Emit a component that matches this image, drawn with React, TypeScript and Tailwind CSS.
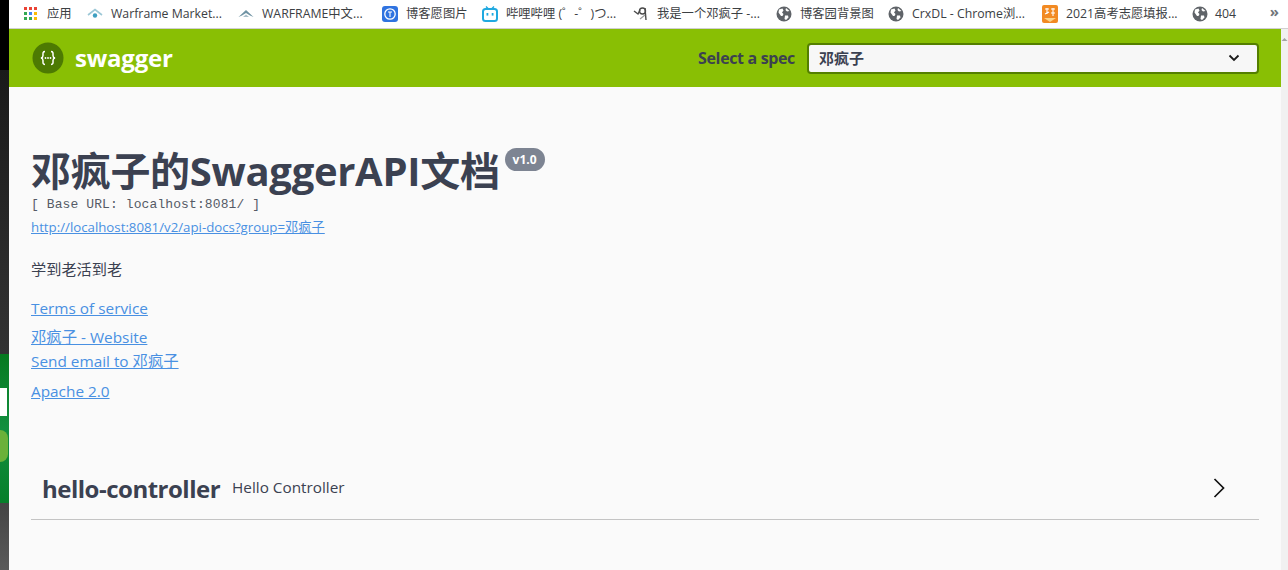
import React from "react";

const Globe = () => (
  <svg width="16" height="16" viewBox="0 0 16 16">
    <circle cx="8" cy="8" r="7.5" fill="#5f6368" />
    <path d="M3 3.500 6.500 2.500 7.500 4.500 6 6.500 7.500 8 6.500 10 5 10 2.500 6.500ZM9 9.500 12 9.500 12.500 11.500 10 14 8.500 13ZM10 2 13.500 5 11 5.500 9.500 4Z" fill="#fff" />
  </svg>
);

const AppsIcon = () => (
  <svg width="14" height="14" viewBox="0 0 14 14">
    <rect x="0" y="0" width="3" height="3" fill="#ea4335" />
    <rect x="5" y="0" width="3" height="3" fill="#ea4335" />
    <rect x="10" y="0" width="3" height="3" fill="#ea4335" />
    <rect x="0" y="5" width="3" height="3" fill="#34a853" />
    <rect x="5" y="5" width="3" height="3" fill="#4285f4" />
    <rect x="10" y="5" width="3" height="3" fill="#fbbc04" />
    <rect x="0" y="10" width="3" height="3" fill="#34a853" />
    <rect x="5" y="10" width="3" height="3" fill="#34a853" />
    <rect x="10" y="10" width="3" height="3" fill="#fbbc04" />
  </svg>
);

const MarketIcon = () => (
  <svg width="16" height="16" viewBox="0 0 16 16">
    <path d="M1 9 8 3.500 15 9" fill="none" stroke="#9cc7d6" strokeWidth="1.600" />
    <circle cx="8" cy="9.500" r="2.200" fill="#3f9fc0" />
  </svg>
);

const WarframeIcon = () => (
  <svg width="16" height="16" viewBox="0 0 16 16">
    <path d="M0.500 11 8 4 15.500 11 12 9.500 8 7 4 9.500Z" fill="#6f93a3" />
    <path d="M5 11 8 8.500 11 11Z" fill="#a9c0ca" />
  </svg>
);

const CnblogsIcon = () => (
  <svg width="16" height="16" viewBox="0 0 16 16">
    <rect width="16" height="16" rx="3" fill="#2f73e0" />
    <circle cx="8" cy="8" r="5.200" fill="none" stroke="#fff" strokeWidth="1.300" />
    <path d="M6 6H10M8 6V11" stroke="#fff" strokeWidth="1.100" />
  </svg>
);

const BiliIcon = () => (
  <svg width="16" height="16" viewBox="0 0 16 16">
    <path d="M4 0.500 6.500 3M12 0.500 9.500 3" stroke="#20a9e0" strokeWidth="1.400" />
    <rect x="1" y="3" width="14" height="12" rx="2.500" fill="none" stroke="#20a9e0" strokeWidth="2" />
    <rect x="4.500" y="7" width="1.800" height="2.600" fill="#20a9e0" />
    <rect x="9.700" y="7" width="1.800" height="2.600" fill="#20a9e0" />
  </svg>
);

const SketchIcon = () => (
  <svg width="16" height="16" viewBox="0 0 16 16">
    <path d="M1 5 5 8 7 4M12 2 13 14" fill="none" stroke="#4a4a4a" strokeWidth="1.400" />
    <circle cx="9.500" cy="5" r="3" fill="none" stroke="#4a4a4a" strokeWidth="1.400" />
    <path d="M7 13 12 9" stroke="#9a9a9a" strokeWidth="1.200" />
  </svg>
);

const GaokaoIcon = () => (
  <svg width="16" height="18" viewBox="0 0 16 18">
    <rect width="16" height="18" rx="2" fill="#f28a22" />
    <path d="M3 4H7M5 3V9M3 9 7 7M9 4H13M11 3V11M9 8H13" stroke="#fff" strokeWidth="1.100" />
    <path d="M2 13H14L8 17Z" fill="#fbd38a" />
  </svg>
);

const bookmarks = [
  { icon: <AppsIcon />, label: "应用", width: "w-[63px]", gap: "gap-[9px]" },
  { icon: <MarketIcon />, label: "Warframe Market...", width: "w-[151px]", gap: "gap-2" },
  { icon: <WarframeIcon />, label: "WARFRAME中文...", width: "w-[144px]", gap: "gap-2" },
  { icon: <CnblogsIcon />, label: "博客愿图片", width: "w-[100px]", gap: "gap-2" },
  { icon: <BiliIcon />, label: "哔哩哔哩 (゜-゜)つ...", width: "w-[151px]", gap: "gap-2" },
  { icon: <SketchIcon />, label: "我是一个邓疯子 -...", width: "w-[143px]", gap: "gap-2" },
  { icon: <Globe />, label: "博客园背景图", width: "w-[112px]", gap: "gap-2" },
  { icon: <Globe />, label: "CrxDL - Chrome浏...", width: "w-[154px]", gap: "gap-2" },
  { icon: <GaokaoIcon />, label: "2021高考志愿填报...", width: "w-[150px]", gap: "gap-2" },
  { icon: <Globe />, label: "404", width: "w-[50px]", gap: "gap-[7px]" },
];

const App = () => {
  return (
    <div className="w-[1288px] h-[570px] overflow-hidden flex font-['Open_Sans','Noto_Sans_CJK_SC',sans-serif]">
      {/* window behind the browser */}
      <div className="w-[9px] flex flex-col shrink-0">
        <div className="h-[70px] bg-black" />
        <div className="h-[284px] bg-gradient-to-b from-[#1a1a1a] to-[#333333]" />
        <div className="h-[149px] bg-gradient-to-b from-[#067a1e] via-[#128f3f] to-[#067f2a] relative overflow-hidden">
          <div className="absolute left-0 top-[34px] w-[7px] h-[28px] bg-white" />
          <div className="absolute left-[-8px] top-[76px] w-[16px] h-[32px] rounded-full bg-[#6bb13a]" />
        </div>
        <div className="flex-1 bg-gradient-to-b from-[#444444] to-[#5a5a5a]" />
      </div>

      <div className="flex-1 flex flex-col min-w-0">
        <div className="h-[29px] shrink-0 bg-white border-b border-[#d0d0d0] flex items-center pl-[15px] relative">
          {bookmarks.map((b) => (
            <div key={b.label} className={`${b.width} ${b.gap} flex items-center shrink-0`}>
              <span className="shrink-0 flex">{b.icon}</span>
              <span className="text-[12.3px] text-[#3c4043] whitespace-nowrap">{b.label}</span>
            </div>
          ))}
          <span className="absolute right-[9px] top-[3px] text-[15px] leading-[16px] font-bold text-[#70757a]">»</span>
        </div>

        <div className="flex-1 flex min-h-0">
          <div className="flex-1 bg-[#fafafa] min-w-0">
            <div className="h-[58px] bg-[#89bf04] flex items-center justify-between pl-[23px] pr-[22px]">
              <div className="flex items-center gap-[11px]">
                <svg width="32" height="32" viewBox="0 0 32 32">
                  <circle cx="16" cy="16" r="15.500" fill="#4d7a02" />
                  <path d="M13 9.500C10.500 9.500 11 11.500 11 13.500 11 15 10.500 15.700 9 16 10.500 16.300 11 17 11 18.500 11 20.500 10.500 22.500 13 22.500M19 9.500C21.500 9.500 21 11.500 21 13.500 21 15 21.500 15.700 23 16 21.500 16.300 21 17 21 18.500 21 20.500 21.500 22.500 19 22.500" fill="none" stroke="#fff" strokeWidth="1.500" />
                  <circle cx="13.500" cy="16" r="0.900" fill="#fff" />
                  <circle cx="16" cy="16" r="0.900" fill="#fff" />
                  <circle cx="18.500" cy="16" r="0.900" fill="#fff" />
                </svg>
                <span className="text-[24px] leading-none font-bold text-white tracking-[-0.2px]">swagger</span>
              </div>
              <div className="flex items-center gap-3">
                <span className="text-[16px] font-bold text-[#3b4151] tracking-[-0.35px]">Select a spec</span>
                <div className="w-[452px] h-[31px] bg-[#f7f7f7] border-2 border-[#547f00] rounded-[4px] flex items-center justify-between pl-[10px] pr-[17px]">
                  <span className="text-[15px] font-semibold text-[#3b4151]">邓疯子</span>
                  <svg width="12" height="8" viewBox="0 0 12 8">
                    <path d="M1.500 1.500 6 6 10.500 1.500" fill="none" stroke="#1a1a1a" strokeWidth="1.800" />
                  </svg>
                </div>
              </div>
            </div>

            <div className="pl-[22px] pr-[22px]">
              <div className="pt-[58px] flex items-start">
                <h1 className="text-[40px] leading-[52px] font-bold text-[#3b4151] tracking-[-0.3px] whitespace-nowrap">
                  邓疯子的SwaggerAPI文档
                </h1>
                <span className="mt-[3px] ml-[5px] h-[23px] px-[8px] rounded-[12px] bg-[#7d8492] text-white text-[12px] font-bold leading-[23px]">
                  v1.0
                </span>
              </div>
              <div className="font-['Liberation_Mono','Noto_Sans_CJK_SC',monospace] text-[13px] leading-[14px] text-[#555a66] mt-[1px] tracking-[0.1px]">
                [ Base URL: localhost:8081/ ]
              </div>
              <a className="block mt-[5px] text-[13.25px] leading-[20px] text-[#4990e2] underline">
                http://localhost:8081/v2/api-docs?group=邓疯子
              </a>
              <p className="mt-[22px] text-[15.2px] leading-[20px] text-[#3b4151]">学到老活到老</p>
              <a className="block mt-[19px] text-[15.35px] leading-[20px] text-[#4990e2] underline">Terms of service</a>
              <a className="block mt-[9px] text-[15.35px] leading-[20px] text-[#4990e2] underline">邓疯子 - Website</a>
              <a className="block mt-[4px] text-[15.35px] leading-[20px] text-[#4990e2] underline">Send email to 邓疯子</a>
              <a className="block mt-[10px] text-[15.35px] leading-[20px] text-[#4990e2] underline">Apache 2.0</a>

              <div className="mt-[48px] h-[71px] pt-[10px] border-b border-[#c4c4c4] flex items-center pl-[11px] pr-[34px]">
                <span className="text-[24px] font-bold text-[#3b4151] tracking-[-0.5px] whitespace-nowrap">hello-controller</span>
                <span className="ml-[12px] text-[15.3px] text-[#3b4151] mb-[3px]">Hello Controller</span>
                <svg className="ml-auto mb-[3px]" width="12" height="20" viewBox="0 0 12 20">
                  <path d="M1.500 1 10.500 10 1.500 19" fill="none" stroke="#111" strokeWidth="1.700" />
                </svg>
              </div>
            </div>
          </div>
          <div className="w-[7px] bg-[#f1f1f1] shrink-0 flex justify-center pt-[8px]">
            <svg width="7" height="5" viewBox="0 0 7 5">
              <path d="M3.500 1 6.500 4H0.500Z" fill="#a3a3a3" />
            </svg>
          </div>
        </div>
      </div>
    </div>
  );
};

export default App;
